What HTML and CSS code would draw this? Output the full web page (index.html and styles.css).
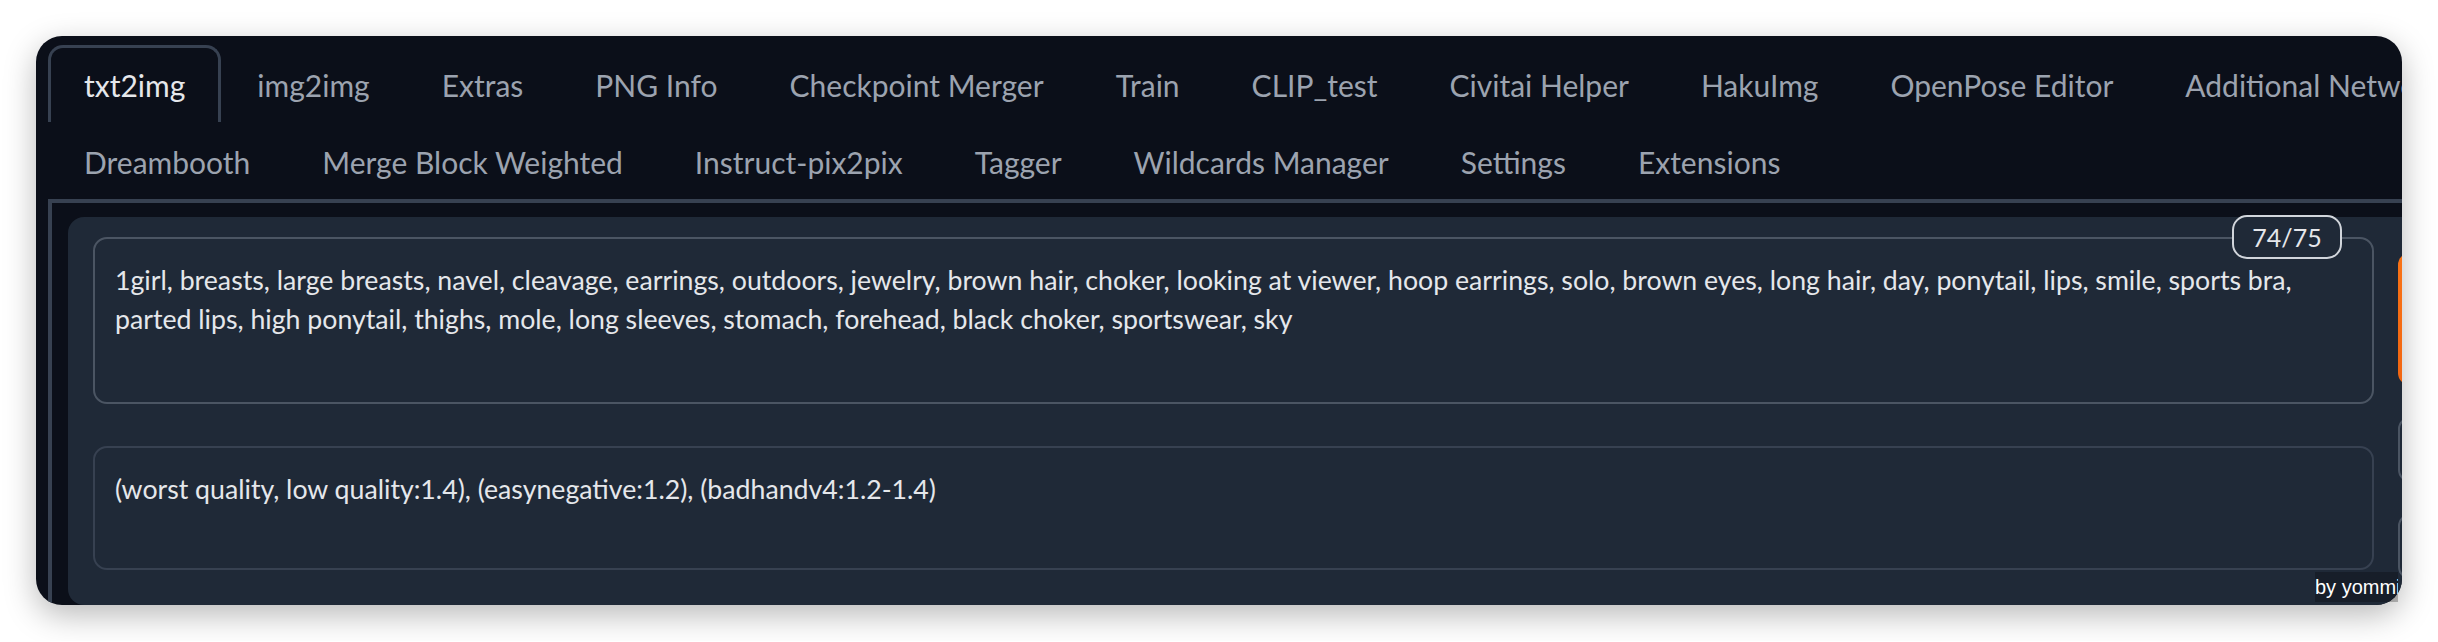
FILE: index.html
```html
<!doctype html>
<html lang="en">
<head>
    <meta charset="utf-8">
    <title>Stable Diffusion WebUI</title>
    <link rel="stylesheet" href="styles.css">
</head>
<body>
    <div class="screen">
        <div class="window">
            <nav class="tabs">
                <div class="tab-row">
                    <button class="tab selected">txt2img</button>
                    <button class="tab">img2img</button>
                    <button class="tab">Extras</button>
                    <button class="tab">PNG Info</button>
                    <button class="tab">Checkpoint Merger</button>
                    <button class="tab">Train</button>
                    <button class="tab">CLIP_test</button>
                    <button class="tab">Civitai Helper</button>
                    <button class="tab">HakuImg</button>
                    <button class="tab">OpenPose Editor</button>
                    <button class="tab">Additional Networks</button>
                </div>
                <div class="tab-row">
                    <button class="tab">Dreambooth</button>
                    <button class="tab">Merge Block Weighted</button>
                    <button class="tab">Instruct-pix2pix</button>
                    <button class="tab">Tagger</button>
                    <button class="tab">Wildcards Manager</button>
                    <button class="tab">Settings</button>
                    <button class="tab">Extensions</button>
                </div>
            </nav>

            <section class="panel">
                <div class="card">
                    <div class="prompts">
                        <div class="prompt positive">
                            <span class="token-count">74/75</span>
                            <p>1girl, breasts, large breasts, navel, cleavage, earrings, outdoors, jewelry, brown hair, choker, looking at viewer, hoop earrings, solo, brown eyes, long hair, day, ponytail, lips, smile, sports bra,<br>parted lips, high ponytail, thighs, mole, long sleeves, stomach, forehead, black choker, sportswear, sky</p>
                        </div>
                        <div class="prompt negative">
                            <p>(worst quality, low quality:1.4), (easynegative:1.2), (badhandv4:1.2-1.4)</p>
                        </div>
                    </div>
                    <div class="actions">
                        <div class="generate"></div>
                        <div class="tool-btn"></div>
                        <div class="tool-btn"></div>
                    </div>
                </div>
            </section>
        </div>
        <div class="credit">by yommi</div>
    </div>
</body>
</html>
```

FILE: styles.css
```css
/* reset stuff */
html {
    box-sizing: border-box;
}

*, *:before, *:after {
    box-sizing: inherit;
}

body, p {
    margin: 0;
    padding: 0;
}

/* actual css */
:root {
    --body-bg: #0b0f19;
    --card-bg: #1f2937;
    --border: #374151;
    --border-light: #4b5563;
    --text: #e5e7eb;
    --text-dim: #9ca3af;
}

body {
    background-color: #fff;
    padding: 36px;
    font-family: Lato, "Noto Sans", sans-serif;
}

.screen {
    position: relative;
    width: 2366px;
    height: 569px;
}

.window {
    width: 100%;
    height: 100%;
    overflow: hidden;
    border-radius: 26px;
    background-color: var(--body-bg);
    box-shadow: 0 10px 32px rgba(0, 0, 0, 0.28);
    padding: 9px 0 0 12px;
}

.tabs {
    display: flex;
    flex-direction: column;
}

.tab-row {
    display: flex;
    white-space: nowrap;
}

.tab {
    flex: none;
    height: 77px;
    padding: 0 33px;
    border: 3px solid transparent;
    border-bottom: none;
    border-radius: 15px 15px 0 0;
    background: none;
    font-family: inherit;
    font-size: 30px;
    color: var(--text-dim);
}

.tab.selected {
    border-color: var(--border);
    color: var(--text);
}

.panel {
    width: 2500px;
    border-top: 4px solid var(--border);
    border-left: 4px solid var(--border);
    padding: 14px 0 20px 16px;
}

.card {
    display: flex;
    gap: 24px;
    background-color: var(--card-bg);
    border-radius: 16px;
    padding: 20px 0 26px 25px;
}

.prompts {
    flex: 0 0 2281px;
    display: flex;
    flex-direction: column;
    gap: 42px;
}

.prompt {
    position: relative;
    border: 2px solid var(--border);
    border-radius: 14px;
    padding: 22px 20px;
    font-size: 26.7px;
    line-height: 39px;
    color: var(--text);
    white-space: nowrap;
}

.prompt.positive {
    height: 167px;
    border-color: var(--border-light);
}

.prompt.negative {
    height: 124px;
}

.token-count {
    position: absolute;
    top: -24px;
    right: 30px;
    width: 110px;
    height: 44px;
    border: 2px solid #d1d5db;
    border-radius: 15px;
    background-color: var(--card-bg);
    font-size: 25px;
    line-height: 40px;
    text-align: center;
}

.actions {
    flex: 0 0 200px;
    display: flex;
    flex-direction: column;
    padding-top: 16px;
}

.generate {
    height: 132px;
    border-radius: 12px;
    background: linear-gradient(to bottom right, #f97316, #ea580c);
}

.tool-btn {
    height: 65px;
    margin-top: 32px;
    border: 2px solid var(--border-light);
    border-radius: 12px;
}

.credit {
    position: absolute;
    right: 4px;
    bottom: 3px;
    width: 83px;
    height: 30px;
    overflow: hidden;
    white-space: nowrap;
    background-color: rgba(0, 0, 0, 0.25);
    font-family: "Liberation Sans", Arial, sans-serif;
    font-size: 20px;
    line-height: 30px;
    color: #fff;
}
```
